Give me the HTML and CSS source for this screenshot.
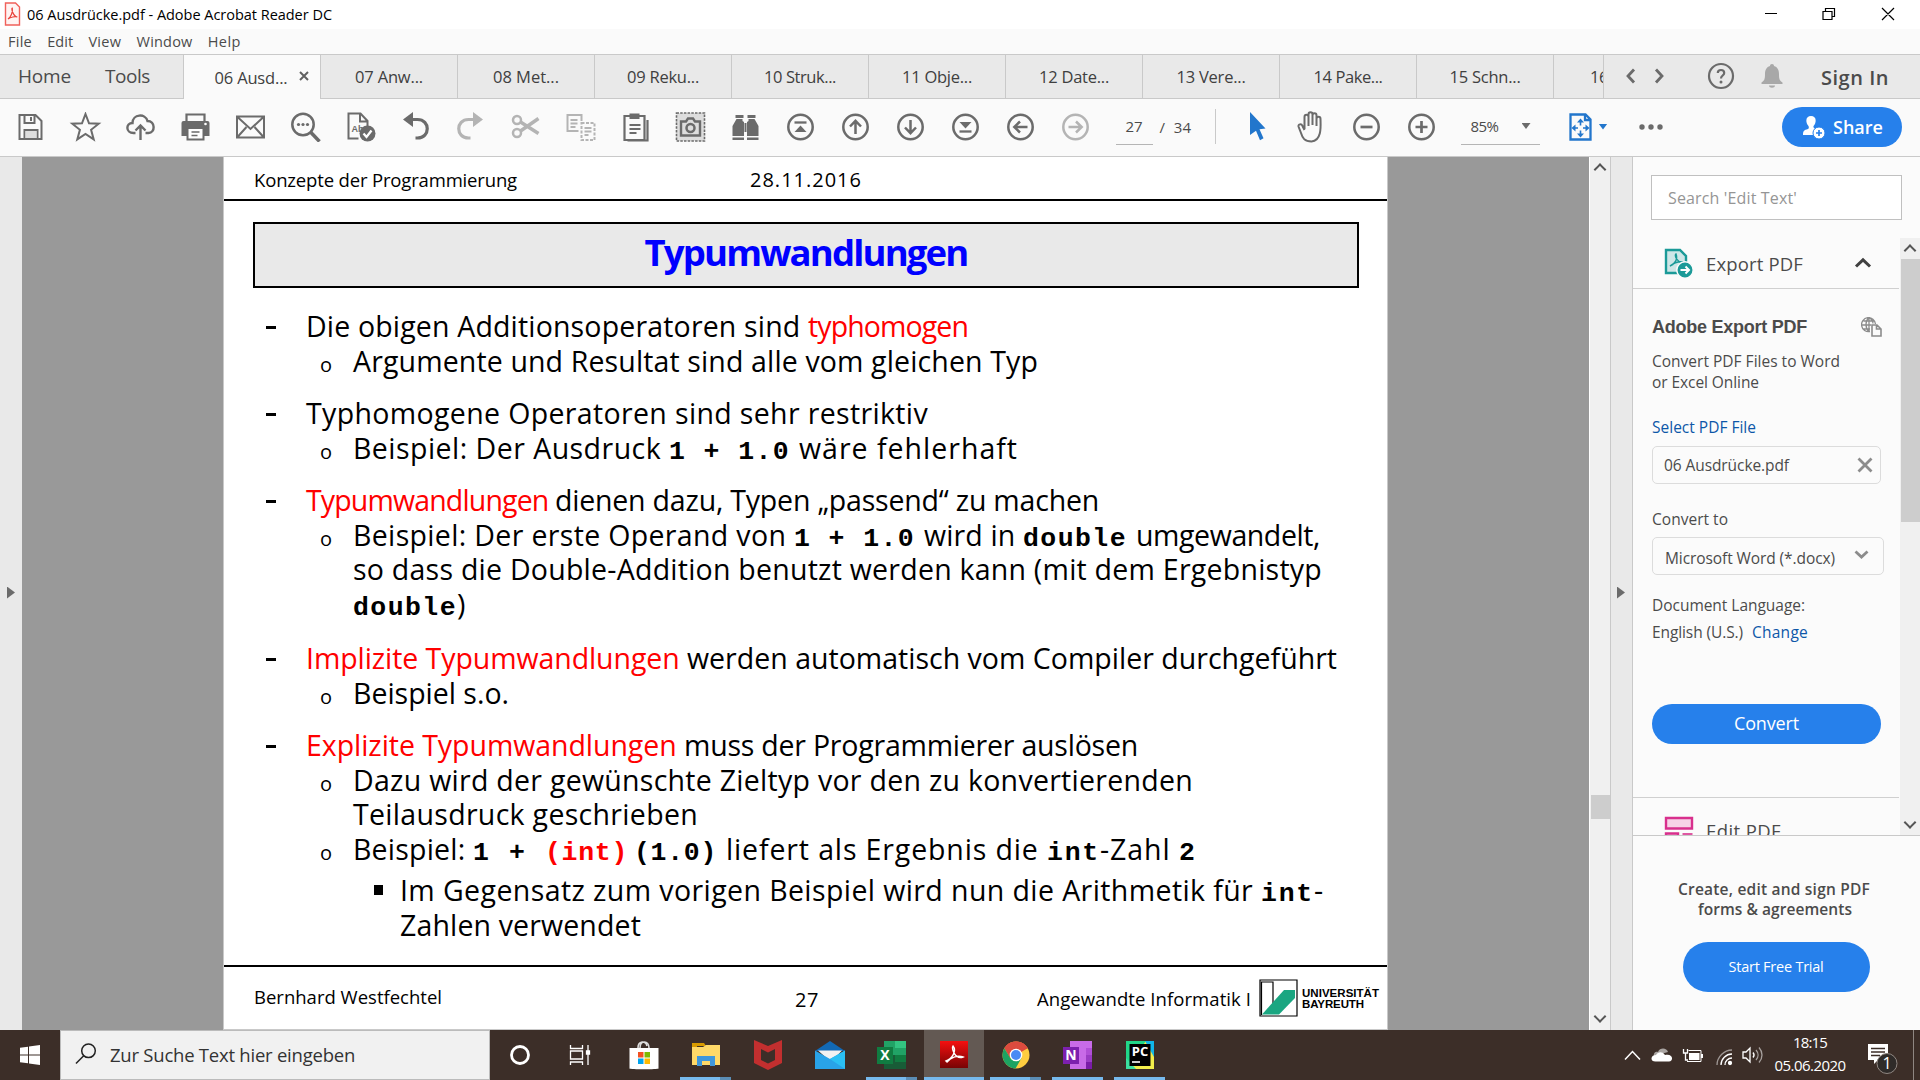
FILE: index.html
```html
<!DOCTYPE html>
<html lang="de">
<head>
<meta charset="utf-8">
<title>06 Ausdrücke.pdf - Adobe Acrobat Reader DC</title>
<link rel="stylesheet" href="styles.css">
</head>
<body>
<header class="titlebar">
  <svg class="app-icon" width="17" height="24" viewBox="0 0 17 24"><path d="M1.500 1h10l4 4v18h-14z" fill="#fff3f2" stroke="#f0605a" stroke-width="1.400"/><path d="M4 17c3-2 5-7 4.300-11-1.300 0 .700 8.500 5 9-2-1-7 .300-9.300 2z" fill="none" stroke="#e8403a" stroke-width="1.200"/></svg>
  <span class="app-title" data-w="305">06 Ausdrücke.pdf - Adobe Acrobat Reader DC</span>
  <svg class="winctl" width="150" height="29" viewBox="0 0 150 29" fill="none" stroke="#000" stroke-width="1.200"><path d="M15 13.500h12M73 11.500h9v8h-9zM75.500 11V8.500h9v8H82M132 8l12 12M144 8l-12 12"/></svg>
</header>
<nav class="menubar"><span data-w="24">File</span><span data-w="26">Edit</span><span data-w="33">View</span><span data-w="56">Window</span><span data-w="33">Help</span></nav>
<div class="tabs">
  <div class="fixed-tabs"><span class="home" data-w="53">Home</span><span data-w="45">Tools</span></div>
  <div class="tab active"><span data-w="73">06 Ausd...</span><svg class="tab-close" width="10" height="10" viewBox="0 0 10 10"><path d="M1 1l8 8M9 1L1 9" stroke="#606060" stroke-width="2"/></svg></div>
  <div class="tab"><span data-w="68">07 Anw...</span></div>
  <div class="tab"><span data-w="66">08 Met...</span></div>
  <div class="tab"><span data-w="72">09 Reku...</span></div>
  <div class="tab"><span data-w="72">10 Struk...</span></div>
  <div class="tab"><span data-w="70">11 Obje...</span></div>
  <div class="tab"><span data-w="70">12 Date...</span></div>
  <div class="tab"><span data-w="69">13 Vere...</span></div>
  <div class="tab"><span data-w="69">14 Pake...</span></div>
  <div class="tab"><span data-w="71">15 Schn...</span></div>
  <div class="tab cut"><span data-w="18">16</span></div>
  <div class="account">
    <svg width="42" height="16" viewBox="0 0 42 16" fill="none" stroke="#6b6b6b" stroke-width="2.800"><path d="M10 1.500L4 8l6 6.500M32 1.500L38 8l-6 6.500"/></svg>
    <svg class="help" width="28" height="28" viewBox="0 0 28 28"><circle cx="14" cy="14" r="12" fill="none" stroke="#6b6b6b" stroke-width="2.200"/><path d="M10.800 11c0-4 6.400-4 6.400 0 0 2.500-3.200 2.500-3.200 5.500" fill="none" stroke="#6b6b6b" stroke-width="2.200"/><circle cx="14" cy="20" r="1.500" fill="#6b6b6b"/></svg>
    <svg class="bell" width="22" height="26" viewBox="0 0 22 26" fill="#a8a8a8"><path d="M11 1c1.300 0 2 .800 2 2 3.500 1 5 4 5 8 0 5 .500 6.500 3.500 8.500v1.500H.500v-1.500C3.500 17.500 4 16 4 11c0-4 1.500-7 5-8 0-1.200.700-2 2-2zM8 22.500h6c0 3-6 3-6 0z"/></svg>
    <span class="signin" data-w="68">Sign In</span>
  </div>
</div>
<div class="toolbar">
  <svg class="tool" viewBox="0 0 30 30"><path d="M4 3h16l6 6v18H4zM9 3v8h10V3M9 27v-9h13v9" /><path d="M10 19h11v7H10z" fill="#ddd" stroke="none"/><path d="M15.500 5v4"/></svg>
  <svg class="tool" viewBox="0 0 30 30"><path d="M15 2l3.500 9.300 9.700.400-7.600 6.100 2.600 9.600-8.200-5.500-8.200 5.500 2.600-9.600-7.600-6.100 9.700-.400z" stroke-width="2"/></svg>
  <svg class="tool" viewBox="0 0 30 30"><path d="M10 21H8C0 21 0 11 7 11 7 2 20 1 22 9c8 0 8 12 1 12h-3" stroke-width="2.400"/><path d="M15 28V14M10 18.500l5-5 5 5" stroke-width="2.400"/></svg>
  <svg class="tool" viewBox="0 0 30 30"><path d="M6 10V2.500h18V10" stroke-width="2.200"/><path d="M1 11q0-2 2-2h24q2 0 2 2v13H1z" class="solid"/><path d="M7 16h16v11.500H7z" fill="#fff" stroke-width="2"/><path d="M11 20h8M11 23.500h6" stroke-width="1.500"/><circle cx="25" cy="12" r="1.300" fill="#fff" stroke="none"/></svg>
  <svg class="tool" viewBox="0 0 30 30"><path d="M1.500 4.500h27v21h-27zM2 5l13 12L28 5M2 25l9-10M28 25l-9-10"/></svg>
  <svg class="tool" viewBox="0 0 30 30"><circle cx="12.500" cy="12.500" r="10.700" stroke-width="2.500"/><path d="M20 20l9 9.500" stroke-width="3.500"/><g class="solid"><circle cx="8" cy="12.500" r="1.600"/><circle cx="12.500" cy="12.500" r="1.600"/><circle cx="17" cy="12.500" r="1.600"/></g></svg>
  <svg class="tool" viewBox="0 0 30 30"><path d="M13 26.500H3v-25h12l7 7.500v5M14.500 2v7.500H22"/><text x="6" y="20" class="abc">Ab</text><circle cx="22" cy="21.500" r="8" class="solid"/><path d="M18 21.500l3 3.500 5-6.500" stroke="#fff" stroke-width="2.300"/></svg>
  <svg class="tool" viewBox="0 0 30 30"><path d="M5 7.500h12c13 0 13 18.500 0 18.500h-2" stroke-width="3.200"/><path d="M12.500 0v15L2.500 7.500z" class="solid"/></svg>
  <svg class="tool dim" viewBox="0 0 30 30"><path d="M24 7.500H13c-13 0-13 18.500 0 18.500h2" stroke-width="3.200"/><path d="M17.500 0v15l10-7.500z" class="solid"/></svg>
  <svg class="tool dim" viewBox="0 0 30 30"><circle cx="6.500" cy="8" r="4" stroke-width="2.500"/><circle cx="6.500" cy="21" r="4" stroke-width="2.500"/><path d="M10 10l18 11.500M10 19L28 6.500" stroke-width="3.500"/></svg>
  <svg class="tool dim" viewBox="0 0 30 30"><path d="M13 19H2V3h14v6M5 8h7M5 11.500h7M5 15h5"/><path d="M16 11h13v17H16z" stroke-dasharray="3 1.500"/><path d="M19 16h7M19 19.500h7M19 23h4"/></svg>
  <svg class="tool" viewBox="0 0 30 30"><path d="M4 4h20v24H4zM27 8v20.500H7" stroke-width="2.200"/><path d="M9 1.500h10v5.500H9z" class="solid"/><path d="M9 13h11M9 17h11M9 21h7"/></svg>
  <svg class="tool" viewBox="0 0 30 30"><path d="M1 1h28v28H1z" fill="#ddd" stroke-width="1.600" stroke-dasharray="2.500 1.200"/><path d="M5.500 9.500h5l2-3h5l2 3h5v14h-19z" stroke-width="2.400"/><circle cx="15" cy="16" r="4" stroke-width="2.500"/></svg>
  <svg class="tool" viewBox="0 0 30 30"><path d="M5 3h8v3H5zM17 3h8v3h-8zM6 7h6v2l1.500 1v14H2V14zM18 7h6l4 7v10H16.500V10L18 9zM2 25.500h11.500V28H2zM16.500 25.500H28V28H16.500zM14 11h2v9h-2z" fill="#6b6b6b" stroke="none"/></svg>
  <svg class="tool" viewBox="0 0 30 30"><circle cx="15" cy="15" r="12.200" stroke-width="2.500"/><path d="M9 10.500h12" stroke-width="2.300"/><path d="M15 13.500l6 6.500H9z" class="solid"/></svg>
  <svg class="tool" viewBox="0 0 30 30"><circle cx="15" cy="15" r="12.200" stroke-width="2.500"/><path d="M15 22V9M9.500 14.500L15 8.800l5.500 5.700" stroke-width="2.500"/></svg>
  <svg class="tool" viewBox="0 0 30 30"><circle cx="15" cy="15" r="12.200" stroke-width="2.500"/><path d="M15 8v13M9.500 15.500l5.500 5.700 5.500-5.700" stroke-width="2.500"/></svg>
  <svg class="tool" viewBox="0 0 30 30"><circle cx="15" cy="15" r="12.200" stroke-width="2.500"/><path d="M9 19.500h12" stroke-width="2.300"/><path d="M15 16.500L9 10h12z" class="solid"/></svg>
  <svg class="tool" viewBox="0 0 30 30"><circle cx="15" cy="15" r="12.200" stroke-width="2.500"/><path d="M22 15H9M14.500 9.500L8.800 15l5.700 5.500" stroke-width="2.500"/></svg>
  <svg class="tool dim" viewBox="0 0 30 30"><circle cx="15" cy="15" r="12.200" stroke-width="2.500"/><path d="M8 15h13M15.500 9.500l5.700 5.500-5.700 5.500" stroke-width="2.500"/></svg>
  <div class="page-no"><span data-w="17">27</span></div>
  <span class="page-of" data-w="32">/&nbsp; 34</span>
  <i class="sep"></i>
  <svg class="pointer" width="18" height="29" viewBox="0 0 18 29"><path d="M1 0l15.500 16.500-6 .700 4 9-3.500 2-4-9.500L1 23z" fill="#2276cc"/></svg>
  <svg class="tool hand" viewBox="0 0 30 32"><path d="M8 18V6c0-3 4-3 4 0v9M12 14V3.500c0-3 4-3 4 0V14M16 14V4.500c0-3 4-3 4 0V15M20 15V8c0-3 4-3 4 0 0 5 2 22-9 22.500C8 30.500 6 27 4.500 22L2 15.500c-.500-2.500 3-3 4-.500l2 4" stroke-width="2"/></svg>
  <svg class="tool" viewBox="0 0 30 30"><circle cx="15" cy="15" r="12.200" stroke-width="2.500"/><path d="M9 15h12" stroke-width="2.700"/></svg>
  <svg class="tool" viewBox="0 0 30 30"><circle cx="15" cy="15" r="12.200" stroke-width="2.500"/><path d="M9 15h12M15 9v12" stroke-width="2.700"/></svg>
  <div class="zoom-level"><span data-w="28">85%</span><i class="caret"></i></div>
  <svg class="fit" width="24" height="28" viewBox="0 0 24 28"><path d="M1.500 1.500h15l5 5v20h-20zM16 2v5h5" fill="none" stroke="#2276cc" stroke-width="2.300"/><path d="M4 15h15M11.500 7.500v15" stroke="#2276cc" stroke-width="1.600" stroke-dasharray="5 5"/><path d="M11.500 5.500l3.500 4H8zM11.500 24.500L15 20.500H8zM2.500 15l4-3.500v7zM20.500 15l-4-3.500v7z" fill="#2276cc"/></svg>
  <i class="caret blue"></i>
  <svg class="more" width="24" height="6" viewBox="0 0 24 6" fill="#6b6b6b"><circle cx="3" cy="3" r="2.700"/><circle cx="12" cy="3" r="2.700"/><circle cx="21" cy="3" r="2.700"/></svg>
  <div class="share"><svg width="24" height="24" viewBox="0 0 24 24"><path d="M9 1c6 0 5.500 7 2.500 10-.500 2 1.500 2.500 3 3.500L13 20H1c0-4 1-5 5-6 1-.500 1-1.500.500-3C3.500 8 3 1 9 1z" fill="#fff"/><circle cx="17" cy="18" r="6" fill="#fff" stroke="#2680eb"/><path d="M17 15v6M14 18h6" stroke="#2680eb" stroke-width="1.700"/></svg><b data-w="50">Share</b></div>
</div>

<main class="workspace">
  <aside class="rail left"><i class="rail-arrow"></i></aside>
  <section class="canvas">
    <article class="page">
      <div class="page-head"><span data-w="263">Konzepte der Programmierung</span><span class="date" data-w="112">28.11.2016</span></div>
      <h1><span data-w="323">Typumwandlungen</span></h1>
      <div class="body">
        <div class="group">
          <p><i class="dash"></i><span data-w="502">Die obigen Additionsoperatoren sind </span><span class="red" data-w="160">typhomogen</span></p>
          <p class="sub"><i class="ring">o</i><span data-w="685">Argumente und Resultat sind alle vom gleichen Typ</span></p>
        </div>
        <div class="group">
          <p><i class="dash"></i><span data-w="622">Typhomogene Operatoren sind sehr restriktiv</span></p>
          <p class="sub"><i class="ring">o</i><span data-w="316">Beispiel: Der Ausdruck </span><code class="gap" data-w="121">1 + 1.0</code><span data-w="219">wäre fehlerhaft</span></p>
        </div>
        <div class="group long">
          <p><i class="dash"></i><span class="red" data-w="249">Typumwandlungen </span><span data-w="544">dienen dazu, Typen „passend“ zu machen</span></p>
          <p class="sub"><i class="ring">o</i><span data-w="441">Beispiel: Der erste Operand von </span><code class="gap" data-w="121">1 + 1.0</code><span data-w="99">wird in </span><code class="gap" data-w="104">double</code><span data-w="184">umgewandelt,</span></p>
          <p class="sub"><i></i><span data-w="969">so dass die Double-Addition benutzt werden kann (mit dem Ergebnistyp</span></p>
          <p class="sub"><i></i><code data-w="104">double</code><span data-w="12">)</span></p>
        </div>
        <div class="group">
          <p><i class="dash"></i><span class="red" data-w="381">Implizite Typumwandlungen </span><span data-w="650">werden automatisch vom Compiler durchgeführt</span></p>
          <p class="sub"><i class="ring">o</i><span data-w="156">Beispiel s.o.</span></p>
        </div>
        <div class="group">
          <p><i class="dash"></i><span class="red" data-w="378">Explizite Typumwandlungen </span><span data-w="454">muss der Programmierer auslösen</span></p>
          <p class="sub"><i class="ring">o</i><span data-w="840">Dazu wird der gewünschte Zieltyp vor den zu konvertierenden</span></p>
          <p class="sub"><i></i><span data-w="345">Teilausdruck geschrieben</span></p>
          <p class="sub tight"><i class="ring">o</i><span data-w="120">Beispiel: </span><code data-w="72">1 + </code><code class="red cast" data-w="83">(int)</code><code class="arg" data-w="83">(1.0)</code><span data-w="321">liefert als Ergebnis die </span><code data-w="53">int</code><span data-w="79">-Zahl </span><code data-w="17">2</code></p>
          <p class="sub2 first"><i class="square"></i><span data-w="861">Im Gegensatz zum vorigen Beispiel wird nun die Arithmetik für </span><code data-w="53">int</code><span data-w="12">-</span></p>
          <p class="sub2"><i></i><span data-w="241">Zahlen verwendet</span></p>
        </div>
      </div>
      <footer class="page-foot">
        <span class="author" data-w="188">Bernhard Westfechtel</span><span class="num" data-w="24">27</span><span class="dept" data-w="214">Angewandte Informatik I</span>
        <svg width="39" height="38" viewBox="0 0 39 38"><path d="M1 1h37v36H1zM2.500 36V3h11.500v23" fill="#fff" stroke="#000" stroke-width="1.200"/><path d="M3 35.500L25 11h11v8L20 35.500z" fill="#1aa681"/></svg>
        <div class="uni"><span data-w="77">UNIVERSITÄT</span><span data-w="62">BAYREUTH</span></div>
      </footer>
    </article>
  </section>
  <div class="vscroll doc"><i class="chev up"></i><i class="thumb"></i><i class="chev down"></i></div>
  <aside class="rail right"><i class="rail-arrow"></i></aside>
  <aside class="panel">
    <div class="find"><span data-w="129">Search 'Edit Text'</span></div>
    <div class="tool-list">
      <div class="tool-items">
        <div class="tool-head">
          <svg width="30" height="30" viewBox="0 0 30 30"><path d="M2 2h14l6 6v17H2z" fill="#cfe6e7" stroke="#1b9a98" stroke-width="2.400"/><path d="M6 18c5-2 8-7 6-12-2 1 1 9 7 8-4-1-9 1-13 4z" fill="none" stroke="#1b9a98" stroke-width="1.400"/><circle cx="21" cy="22" r="8.200" fill="#1b9a98" stroke="#fbfbfb" stroke-width="1.500"/><path d="M16.500 22h8M21.500 18.500l3.500 3.500-3.500 3.500" fill="none" stroke="#fff" stroke-width="2"/></svg>
          <span data-w="97">Export PDF</span>
          <svg class="fold" width="18" height="12" viewBox="0 0 18 12"><path d="M2 9.500L9 2.800l7 6.700" fill="none" stroke="#404040" stroke-width="3"/></svg>
        </div>
        <div class="export">
          <div class="export-title"><b data-w="155">Adobe Export PDF</b><svg width="21" height="20" viewBox="0 0 21 20" fill="none" stroke="#8c8c8c" stroke-width="1.300"><path d="M9 14.500A7 7 0 1 1 14.500 7M8 .500v14M1 8h9M2.500 4h11M2.500 12H9M8 .500C4 4 4 11 8 14.500M8 .500c3 2 4 5 4 6"/><path d="M11 8h5l4 4v7h-9zM15.500 8v4H20" fill="#fbfbfb" stroke-width="1.600"/></svg></div>
          <p class="desc"><span data-w="188">Convert PDF Files to Word</span><br><span data-w="107">or Excel Online</span></p>
          <div class="link select-link"><span data-w="104">Select PDF File</span></div>
          <div class="field file"><span data-w="125">06 Ausdrücke.pdf</span><svg width="16" height="16" viewBox="0 0 16 16"><path d="M1.500 1.500l13 13M14.500 1.500l-13 13" stroke="#8c8c8c" stroke-width="2.800"/></svg></div>
          <div class="label"><span data-w="76">Convert to</span></div>
          <div class="field format"><span data-w="170">Microsoft Word (*.docx)</span><svg width="15" height="10" viewBox="0 0 15 10"><path d="M1.500 1.500l6 5.500 6-5.500" fill="none" stroke="#8c8c8c" stroke-width="2.800"/></svg></div>
          <div class="lang"><span data-w="153">Document Language:</span><br><span data-w="91">English (U.S.)</span><span class="link change" data-w="56">Change</span></div>
          <div class="btn convert"><span data-w="65">Convert</span></div>
        </div>
        <div class="tool-head edit">
          <svg width="30" height="30" viewBox="0 0 30 30" fill="#f7d3e7" stroke="#d8308d" stroke-width="2.400"><path d="M2 2h26v10.500H2zM2 17.500h12V29H2z"/><path d="M18.500 18h10" stroke-width="1.600"/></svg>
          <span data-w="75">Edit PDF</span>
        </div>
      </div>
      <div class="vscroll"><i class="chev up"></i><i class="thumb"></i><i class="chev down"></i></div>
    </div>
    <div class="promo">
      <b data-w="192">Create, edit and sign PDF</b><b class="second" data-w="154">forms &amp; agreements</b>
      <div class="btn trial"><span data-w="95">Start Free Trial</span></div>
    </div>
  </aside>
</main>

<footer class="taskbar">
  <div class="start"><svg width="20" height="20" viewBox="0 0 20 20" fill="#fff"><path d="M0 2.800l8-1.100v7.800H0zM9 1.500L20 0v9.500H9zM0 10.500h8v7.800l-8-1.100zM9 10.500h11V20L9 18.500z"/></svg></div>
  <div class="search"><svg width="22" height="22" viewBox="0 0 22 22" fill="none" stroke="#222" stroke-width="1.500"><circle cx="13.500" cy="7.800" r="6.800"/><path d="M8.700 12.700L1 20.500"/></svg><span data-w="245">Zur Suche Text hier eingeben</span></div>
  <div class="task cortana"><svg width="22" height="22" viewBox="0 0 22 22"><circle cx="11" cy="11" r="8.500" fill="none" stroke="#fff" stroke-width="2.800"/></svg></div>
  <div class="task view"><svg width="22" height="22" viewBox="0 0 22 22" fill="none" stroke="#fff" stroke-width="1.300"><path d="M1.500 1v3.500h12V1M1.500 7h12v8h-12zM1.500 21v-3h12v3M19 1v20"/><path d="M17.500 7h3v3h-3z" fill="#fff"/></svg></div>
  <div class="task"><svg width="30" height="30" viewBox="0 0 30 30"><path d="M11 8c0-8 9-8 9 0M9 8c0-7 8-8 9-2" fill="none" stroke="#ddd" stroke-width="1.600"/><path d="M.500 8h29v20.500c0 1-29 1-29 0z" fill="#fff"/><path d="M9 12h5.500v5.500H9z" fill="#f25022"/><path d="M15.500 12H21v5.500h-5.500z" fill="#7fba00"/><path d="M9 18.500h5.500V24H9z" fill="#00a4ef"/><path d="M15.500 18.500H21V24h-5.500z" fill="#ffb900"/></svg></div>
  <div class="task running stack"><svg width="30" height="30" viewBox="0 0 30 30"><path d="M1 3h12l2 3H6v4H1z" fill="#d99b00"/><path d="M1 7h11l3-2h14v20H1z" fill="#ffd968"/><path d="M6 26V16h18v10h-5v-5h-8v5z" fill="#3f97db"/></svg></div>
  <div class="task"><svg width="30" height="30" viewBox="0 0 30 30"><path d="M1 0l14 6 14-6v23l-14 7-14-7zM8 9v11l7 3.500L22 20V9l-7 3.500z" fill="#c22f2f" fill-rule="evenodd"/></svg></div>
  <div class="task"><svg width="30" height="30" viewBox="0 0 30 30"><path d="M0 11L15 1l15 10z" fill="#1269b5"/><path d="M3 10.500h24L16 22z" fill="#f2f2f2"/><path d="M0 10.500v18.500h30V10.500L15 19z" fill="#29a3e8"/><path d="M30 10.500v18.500L15 19z" fill="#2bc0f4"/></svg></div>
  <div class="task running stack"><svg width="30" height="30" viewBox="0 0 30 30"><path d="M7 1h22v28H7z" fill="#185c37"/><path d="M7 1h11v14H7z" fill="#21a366"/><path d="M18 1h11v7H18z" fill="#33c481"/><path d="M18 8h11v7H18z" fill="#21a366"/><path d="M18 15h11v7H18z" fill="#107c41"/><path d="M0 7h16v17H0z" fill="#107c41"/><text x="8" y="20" class="glyph">X</text></svg></div>
  <div class="task running current"><svg width="30" height="30" viewBox="0 0 30 30"><defs><linearGradient id="ar" x2="0" y2="1"><stop stop-color="#f50f0f"/><stop offset="1" stop-color="#780404"/></linearGradient></defs><path d="M1 1h28v27H1z" fill="url(#ar)"/><path d="M7 21c6-2 11-10 7-15-2 2 2 14 10 11-5-2-12 0-16 5z" fill="none" stroke="#fff" stroke-width="1.400"/></svg></div>
  <div class="task running stack"><svg width="30" height="30" viewBox="0 0 30 30"><circle cx="15" cy="15" r="13.500" fill="#ffcd40"/><path d="M15 15L3.300 8.200A13.500 13.500 0 0 1 26.700 8.200z" fill="#dc4b3e"/><path d="M15 8.500h11.900A13.500 13.500 0 0 0 3.300 8.200L9 18z" fill="#dc4b3e"/><path d="M3.300 8.200A13.500 13.500 0 0 0 14.500 28.500L20.500 18 9.500 18.500z" fill="#1da362"/><circle cx="15" cy="15" r="6.300" fill="#fff"/><circle cx="15" cy="15" r="5" fill="#4a8af4"/></svg></div>
  <div class="task running"><svg width="30" height="30" viewBox="0 0 30 30"><path d="M7 1h22v28H7z" fill="#c86be8"/><path d="M23 8h6v7h-6z" fill="#b04fd6"/><path d="M23 15h6v7h-6z" fill="#9a3cc4"/><path d="M23 22h6v7h-6z" fill="#7a1ca8"/><path d="M0 7h16v17H0z" fill="#7c20ae"/><text x="8" y="20" class="glyph">N</text></svg></div>
  <div class="task running"><svg width="30" height="30" viewBox="0 0 30 30"><path d="M1 1h28v28H1z" fill="#f2ee4b"/><path d="M1 1h20L1 29z" fill="#21d789"/><path d="M20 1h9v16z" fill="#10b6e8"/><path d="M1 18v11h10z" fill="#3be0a0"/><path d="M4.500 4h21v22h-21z" fill="#000"/><path d="M7 22h8" stroke="#fff" stroke-width="1.600"/><text x="15" y="16" class="glyph pc">PC</text></svg></div>
  <div class="tray">
    <svg class="t-chev" width="17" height="11" viewBox="0 0 17 11"><path d="M1 9.500l7.500-8 7.500 8" fill="none" stroke="#fff" stroke-width="1.500"/></svg>
    <svg class="t-cloud" width="22" height="16" viewBox="0 0 22 16"><path d="M3 9c-1-4 3-5 4-4 2-5 9-4 10 0z" fill="#aaa5a2"/><path d="M5 14.500C-1 15-1 8 5 8c2-3 6-4 9 0 8-2 9 6 4 6.500z" fill="#fff"/></svg>
    <svg class="t-batt" width="21" height="15" viewBox="0 0 21 15"><path d="M1.500 1v4h4V1M3.500 5v7H6" fill="none" stroke="#fff" stroke-width="1.300"/><path d="M7 5h10.500v7H7z" fill="#fff"/><path d="M6.500 2.500h12.500v11H5" fill="none" stroke="#fff"/><path d="M19 6h2v4h-2z" fill="#fff"/></svg>
    <svg class="t-wifi" width="17" height="17" viewBox="0 0 17 17" fill="none" stroke="#fff" stroke-width="1.300"><path d="M1 16C1 8 8 1 16 1" opacity=".5"/><path d="M5 16c0-6 5-11 11-11M9 16c0-4 3-7 7-7"/><circle cx="14" cy="14" r="1.500" fill="#fff"/></svg>
    <svg class="t-vol" width="21" height="18" viewBox="0 0 21 18" fill="none" stroke="#fff" stroke-width="1.300"><path d="M1 6h3l4-4v14l-4-4H1zM11 6.500c1.300 1.500 1.300 3.500 0 5"/><path d="M14 4c2.700 3 2.700 7 0 10M17 1.500c4 4.500 4 10.500 0 15" opacity=".55"/></svg>
    <div class="clock"><span data-w="34">18:15</span><span data-w="71">05.06.2020</span></div>
    <svg class="t-note" width="32" height="32" viewBox="0 0 32 32"><path d="M1 1h20v16H11l-4 4v-4H1z" fill="#fff"/><path d="M4 5.500h14M4 9h14M4 12.500h9" stroke="#3c2e28" stroke-width="1.300"/><circle cx="20" cy="20.500" r="10" fill="#2f2b29" stroke="#8f8782"/><text x="20" y="26" class="badge">1</text></svg>
    <i class="edge"></i>
  </div>
</footer>
<script src="fit.js"></script>
</body>
</html>
```
FILE: styles.css
```css
* { box-sizing: border-box; }
body { margin: 0; width: 1920px; height: 1080px; overflow: hidden; display: flex; flex-direction: column; background: #fbfbfb; font-family: "Segoe UI", "Open Sans", "Noto Sans", sans-serif; color: #4b4b4b; }
i { font-style: normal; flex: none; }
svg { display: block; flex: none; }
[data-w] { white-space: pre; flex: none; }

.titlebar { height: 29px; flex: none; background: #fff; display: flex; align-items: center; padding-left: 4px; }
.app-icon { margin-bottom: 2px; }
.app-title { margin-left: 6px; font-size: 14.5px; color: #000; }
.winctl { margin-left: auto; margin-right: 20px; }
.menubar { height: 25px; flex: none; display: flex; align-items: center; gap: 15.200px; padding-left: 8px; background: #fafafa; font-size: 14.5px; }

.tabs { height: 45px; flex: none; display: flex; background: #e9e9e9; border-top: 1px solid #c9c9c9; border-bottom: 1px solid #c9c9c9; }
.fixed-tabs { width: 183px; flex: none; display: flex; align-items: center; gap: 34px; padding: 0 0 2px 18px; font-size: 19px; }
.tab { position: relative; width: 137px; flex: none; display: flex; align-items: center; justify-content: center; border-left: 1px solid #c9c9c9; font-size: 16.5px; color: #404040; }
.tab.active { background: #fafafa; height: 44px; padding-right: 2px; }
.tab-close { position: absolute; left: 115px; top: 16px; }
.tab.cut { width: 50px; justify-content: flex-start; padding-left: 36px; overflow: hidden; }
.account { flex: 1; display: flex; align-items: center; border-left: 1px solid #c9c9c9; padding: 0 0 2px 20px; }
.account .help { margin-left: 41px; }
.account .bell { margin-left: 26px; }
.signin { margin-left: 38px; font-size: 20px; font-weight: 600; padding-top: 3px; }

.toolbar { height: 58px; flex: none; display: flex; align-items: center; padding: 0 0 2px 2.500px; border-bottom: 1px solid #c9c9c9; background: #fafafa; font-size: 15px; }
.tool { width: 55px; height: 30px; fill: none; stroke: #6b6b6b; stroke-width: 2; }
.tool .solid { fill: #6b6b6b; stroke: none; }
.tool.dim { stroke: #b4b4b4; }
.tool.dim .solid { fill: #b4b4b4; }
.tool .abc { font: bold 9px "Liberation Sans", sans-serif; fill: #6b6b6b; stroke: none; }
.page-no { width: 37px; height: 36px; margin-left: 13px; display: flex; align-items: center; justify-content: center; border-bottom: 1px solid #b5b5b5; }
.page-of { margin-left: 7px; }
.sep { width: 1px; height: 35px; margin-left: 23px; background: #c9c9c9; }
.pointer { margin-left: 33px; }
.hand { height: 32px; margin-left: 17px; }
.zoom-level { width: 79px; height: 36px; margin-left: 12px; padding: 0 9px 0 10px; display: flex; align-items: center; justify-content: space-between; border-bottom: 1px solid #b5b5b5; }
.caret { width: 9px; height: 6px; background: #6b6b6b; clip-path: polygon(0 0, 100% 0, 50% 100%); }
.caret.blue { background: #2276cc; margin-left: 6px; }
.fit { margin-left: 29px; }
.more { margin-left: 31px; }
.share { width: 120px; height: 40px; margin: 0 18px 0 auto; border-radius: 20px; background: #2680eb; color: #fff; display: flex; align-items: center; padding-left: 20px; gap: 7px; font-size: 18px; font-weight: 600; }
.share b { font-weight: 600; }

.workspace { height: 873px; flex: none; display: flex; }
.rail { background: #e9e9e9; display: flex; align-items: center; flex: none; padding-bottom: 2px; }
.rail.left { width: 22px; padding-left: 7px; }
.rail.right { width: 23px; border: 1px solid #c9c9c9; border-width: 0 1px; padding-left: 6px; }
.rail-arrow { width: 8px; height: 12px; background: #6b6b6b; clip-path: polygon(0 0, 100% 50%, 0 100%); }
.canvas { width: 1567px; flex: none; background: #999; padding-left: 201px; }
.page { width: 1165px; height: 873px; background: #fff; border: 1px solid #c9c9c9; border-top: 0; display: flex; flex-direction: column; color: #000; }
.page-head { height: 44px; flex: none; border-bottom: 2px solid #000; display: flex; align-items: center; padding: 2px 0 0 30px; font-size: 18.500px; }
.page-head .date { margin-left: 233px; font-size: 20px; }
h1 { margin: 21px 28px 0 29px; height: 66px; flex: none; border: 2px solid #000; background: #e9e9e9; display: flex; align-items: center; justify-content: center; padding-bottom: 6px; font: bold 36.500px "Comic Sans MS", "Open Sans", sans-serif; color: #00f; }
.body { height: 677px; flex: none; padding: 21px 0 0 42px; font: 28.500px "Comic Sans MS", "Open Sans", sans-serif; }
.group { margin-bottom: 17.800px; }
.group.long { margin-bottom: 19.600px; }
.body p { margin: 0; height: 34.600px; line-height: 34.600px; display: flex; align-items: baseline; }
.body p > i { width: 40px; }
.body p.sub { padding-left: 54px; }
.body p.sub > i { width: 33px; font-size: 20px; line-height: 1; }
.body p.sub2 { padding-left: 108px; }
.body p.sub2 > i { width: 26px; }
.body p.sub2.first { margin-top: 8px; }
.body p.tight { height: 33.500px; }
.body p > i.dash::before { content: ""; display: inline-block; width: 10px; height: 3px; background: #000; margin-bottom: 8px; }
.body p.sub2 > i.square::before { content: ""; display: inline-block; width: 9px; height: 10px; background: #000; margin-bottom: 6px; }
code { font: bold 26.500px/1 "Courier New", "Liberation Mono", monospace; }
code.gap { margin-right: 9px; }
code.cast { margin-right: 6px; }
code.arg { margin-right: 9px; }
.red { color: #f00; }
.page-foot { flex: 1; border-top: 2px solid #000; display: flex; align-items: flex-start; padding: 13px 0 0 30px; font-size: 18.500px; line-height: 34px; }
.page-foot .author { padding-top: 0; }
.page-foot .num { margin-left: 353px; font-size: 20px; padding-top: 3px; }
.page-foot .dept { margin: 2px 8px 0 218px; }
.page-foot svg { margin-top: -1px; }
.uni { display: flex; flex-direction: column; padding: 8px 0 0 4px; font: bold 11.500px/11px "Liberation Sans", sans-serif; }

.vscroll { width: 20px; flex: none; background: #f0f0f0; display: flex; flex-direction: column; align-items: center; }
.vscroll.doc { width: 21px; border-left: 1px solid #fff; padding: 6px 0 7px; }
.chev { width: 9px; height: 9px; border: solid #555; border-width: 2px 0 0 2px; transform: translate(-.5px, 2px) rotate(45deg); }
.chev.down { margin-top: auto; transform: translate(-.5px, -2px) rotate(225deg); }
.thumb { width: 19px; background: #cdcdcd; }
.doc .thumb { height: 24px; margin-top: 623px; }

.panel { flex: 1; display: flex; flex-direction: column; background: #fbfbfb; font-size: 15.500px; }
.find { width: 251px; height: 45px; margin: 18px 0 18px 18px; flex: none; border: 1px solid #c0c0c0; background: #fff; display: flex; align-items: center; padding-left: 16px; font-size: 16px; color: #959595; }
.tool-list { height: 597px; flex: none; display: flex; overflow: hidden; }
.tool-items { width: 266px; margin-right: 1px; flex: none; }
.tool-head { height: 51px; border-bottom: 1px solid #d0d0d0; display: flex; align-items: center; padding: 0 0 0 31px; font-size: 18.500px; }
.tool-head span { margin-left: 12px; }
.tool-head .fold { margin-left: 51px; }
.export { height: 509px; padding-left: 19px; border-bottom: 1px solid #d0d0d0; display: flex; flex-direction: column; align-items: flex-start; line-height: 21px; }
.export-title { margin-top: 27px; height: 22px; width: 230px; display: flex; align-items: center; justify-content: space-between; font: bold 18px "Liberation Sans", Arial, sans-serif; }
.desc { margin: 13px 0 0; }
.link { color: #0d57a8; }
.change { margin-left: 9px; }
.select-link { margin-top: 24px; }
.field { width: 229px; height: 38px; flex: none; border: 1px solid #dcdcdc; border-radius: 5px; display: flex; align-items: center; justify-content: space-between; padding: 0 7px 0 11px; }
.file { margin-top: 8px; }
.label { margin-top: 25px; }
.format { margin-top: 7px; width: 232px; padding: 4px 14px 0 12px; }
.format svg { margin-bottom: 6px; }
.lang { margin-top: 17px; line-height: 27px; }
.btn { background: #2680eb; color: #fff; display: flex; align-items: center; justify-content: center; flex: none; }
.convert { width: 229px; height: 40px; margin-top: 58px; border-radius: 20px; font-size: 18px; padding-bottom: 2px; }
.tool-head.edit { padding-top: 0; height: 66px; flex: none; }
.tool-head.edit svg { margin-top: 0; }
.tool-list .vscroll { width: 20px; padding: 6px 0; }
.tool-list .thumb { height: 263px; margin-top: 6px; }
.promo { flex: 1; border-top: 1px solid #c9c9c9; display: flex; flex-direction: column; align-items: center; padding: 43px 3px 0 0; line-height: 20px; }
.promo b { font-weight: 600; margin-right: 2px; }
.promo b.second { margin-right: 0; }
.trial { width: 187px; height: 50px; border-radius: 25px; margin: 23px 0 0 2px; font-size: 14.500px; }

.taskbar { height: 50px; flex: none; display: flex; background: #3c2e28; }
.start { width: 60px; padding: 15px 0 0 20px; }
.search { width: 430px; border: 1px solid #bbb; background: #f1f1f1; display: flex; align-items: center; padding: 0 0 2px 14px; gap: 13px; font-size: 18.500px; color: #333; }
.task { width: 62px; display: flex; align-items: center; justify-content: center; position: relative; }
.cortana { width: 60px; }
.view { width: 63px; padding-right: 4px; }
.running::after { content: ""; position: absolute; left: 5px; right: 6px; bottom: 0; height: 3px; background: #76b9ed; }
.stack::after { background: linear-gradient(90deg, #76b9ed 78%, #5b8db5 78%); }
.current { background: #635953; width: 60px; margin: 0 1px; }
.current::after { left: 0; right: 0; }
.glyph { font: bold 14px "Open Sans", sans-serif; fill: #fff; text-anchor: middle; }
.pc { font-size: 13px; }
.tray { margin-left: auto; display: flex; align-items: center; width: 296px; flex: none; }
.t-cloud { margin-left: 10px; }
.t-batt { margin-left: 9px; }
.t-wifi { margin: 4px 0 0 13px; }
.t-vol { margin-left: 9px; }
.clock { display: flex; flex-direction: column; align-items: center; line-height: 23px; margin-left: 11px; width: 72px; color: #fff; font-size: 15px; padding-bottom: 2px; }
.t-note { margin: 8px 0 0 21px; }
.badge { font: 16px "Open Sans", sans-serif; fill: #fff; text-anchor: middle; }
.edge { width: 1px; height: 50px; margin-left: 14px; background: #8f8782; }
```
FILE: fit.js
```js
// Sets every text run to its advance width, the way a PDF text layer does.
document.querySelectorAll('[data-w]').forEach(function (run) {
  var target = Number(run.dataset.w);
  var range = document.createRange();
  range.selectNodeContents(run);
  var natural = range.getBoundingClientRect().width;
  run.style.letterSpacing = ((target - natural) / run.textContent.length) + 'px';
});
```
